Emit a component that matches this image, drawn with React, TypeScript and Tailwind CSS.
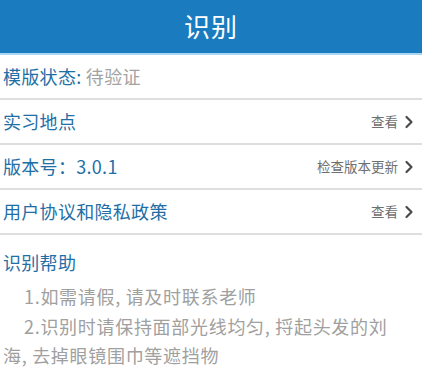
import { ChevronRight } from "lucide-react";

const font = { fontFamily: '"Noto Sans CJK SC", "Noto Sans", sans-serif' };

function Row({ label, action }: { label: React.ReactNode; action?: string }) {
  return (
    <div className="flex h-[45px] items-center justify-between border-b-2 border-[#dedede] pl-[3px] pr-[3px]">
      <div className="text-[18px] tracking-[0.3px] text-[#1f6fa6]">{label}</div>
      {action && (
        <div className="flex items-center text-[13.5px] text-[#6f6f6f]">
          <span>{action}</span>
          <ChevronRight className="ml-[1px] h-[20px] w-[20px] text-[#4a4a4a]" strokeWidth={2.6} />
        </div>
      )}
    </div>
  );
}

export default function App() {
  return (
    <main className="h-[379px] w-[422px] overflow-hidden bg-white" style={font}>
      <header className="flex h-[55px] items-center justify-center border-b-2 border-[#a9d6f0] bg-[#1a7bbf] pb-[2px]">
        <h1 className="text-[26px] leading-none tracking-[1px] text-white">识别</h1>
      </header>

      <Row
        label={
          <>
            模版状态: <span className="text-[#a3a3a3]">待验证</span>
          </>
        }
      />
      <Row label="实习地点" action="查看" />
      <Row label="版本号：3.0.1" action="检查版本更新" />
      <Row label="用户协议和隐私政策" action="查看" />

      <section className="pl-[3px] pr-[20px] pt-[13px]">
        <h2 className="text-[18px] leading-[29px] tracking-[0.3px] text-[#1f6fa6]">识别帮助</h2>
        <div className="mt-[5px] text-[18px] leading-[29.5px] tracking-[0.7px] text-[#a0a0a0]">
          <p className="indent-[21px]">1.如需请假, 请及时联系老师</p>
          <p className="indent-[21px]">2.识别时请保持面部光线均匀, 捋起头发的刘海, 去掉眼镜围巾等遮挡物</p>
        </div>
      </section>
    </main>
  );
}
